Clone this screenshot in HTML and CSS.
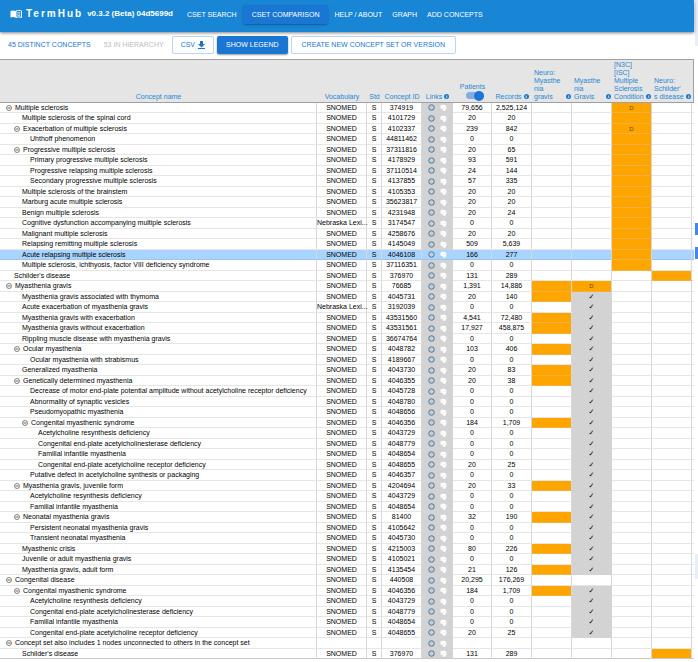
FILE: index.html
```html
<!DOCTYPE html>
<html lang="en">
<head>
<meta charset="utf-8">
<title>TermHub</title>
<link rel="stylesheet" href="styles.css">
</head>
<body>
<div class="page">
  <main class="app">
    <header class="topbar">
      <svg class="logo" viewBox="0 0 24 24" aria-hidden="true"><path fill="currentColor" d="M1 6c3-1.500 7-1.500 11 0v13c-4-1.500-8-1.500-11 0z"/><path fill="none" stroke="currentColor" stroke-width="2" d="M12 6c4-1.500 7-1.500 11 0v13c-4-1.500-7-1.500-11 0z"/><path fill="none" stroke="currentColor" stroke-width="1.500" d="M14.500 9.500q3-1 6 0M14.500 12.500q3-1 6 0M14.500 15.500q3-1 6 0"/></svg>
      <span class="brand">TermHub</span>
      <span class="version">v0.3.2 (Beta) 04d5699d</span>
      <nav class="nav">
        <a href="#">CSET SEARCH</a>
        <a href="#" class="active">CSET COMPARISON</a>
        <a href="#">HELP / ABOUT</a>
        <a href="#">GRAPH</a>
        <a href="#">ADD CONCEPTS</a>
      </nav>
    </header>
    <section class="toolbar">
      <button class="btn plain">45 DISTINCT CONCEPTS</button>
      <button class="btn plain" disabled>53 IN HIERARCHY</button>
      <button class="btn outlined csv">CSV <svg class="download" viewBox="0 0 14 16" aria-hidden="true"><path fill="currentColor" d="M4 0h6v6h4l-7 7-7-7h4zM0 14h14v2H0z"/></svg></button>
      <button class="btn filled">SHOW LEGEND</button>
      <button class="btn outlined wide">CREATE NEW CONCEPT SET OR VERSION</button>
    </section>
    <div class="tablewrap">
    <table class="grid">
      <colgroup>
        <col><col class="c-vocab"><col class="c-std"><col class="c-num"><col class="c-links"><col class="c-pat"><col class="c-num"><col class="c-num"><col class="c-num"><col class="c-num"><col class="c-num"><col class="c-edge">
      </colgroup>
      <thead>
        <tr>
          <th>Concept name</th>
          <th>Vocabulary</th>
          <th>Std</th>
          <th>Concept ID</th>
          <th><span class="head">Links <i class="info">i</i></span></th>
          <th><label class="patients">Patients<input type="checkbox" class="switch" checked></label></th>
          <th><span class="head">Records <i class="info">i</i></span></th>
          <th class="cset"><span class="head"><span>Neuro:<br>Myasthe<br>nia<br>gravis</span><i class="info">i</i></span></th>
          <th class="cset"><span class="head"><span>Myasthe<br>nia<br>Gravis</span><i class="info">i</i></span></th>
          <th class="cset"><span class="head"><span>[N3C]<br>[ISC]<br>Multiple<br>Sclerosis<br>Condition</span><i class="info">i</i></span></th>
          <th class="cset"><span class="head"><span>Neuro:<br>Schilder'<br>s disease</span><i class="info">i</i></span></th>
          <th></th>
        </tr>
      </thead>
      <tbody id="rows"></tbody>
    </table>
    </div>
  </main>
  <aside class="strip"><span class="pale top"></span><span class="mark first"></span><span class="mark"></span><span class="pale low"></span></aside>
</div>
<script src="rows.js"></script>
</body>
</html>
```
FILE: styles.css
```css
* { box-sizing: border-box; }
body { margin: 0; background: #fff; color: #000; font: 7px/8px "Liberation Sans", Arial, sans-serif; }
.page { display: flex; }
.app { flex: 1; min-width: 0; }
.strip { width: 4px; display: flex; flex-direction: column; padding-left: 1px; }
.pale { background: #e9eefa; }
.top { height: 46px; }
.low { height: 25px; margin-top: 295px; }
.mark { height: 12px; background: #4285f4; margin-top: 12px; }
.first { margin-top: 177px; }

.topbar { display: flex; align-items: center; height: 32px; padding: 0 0 4px 10px; background: #1886d4; color: #fff; box-shadow: 0 1px 3px rgba(0, 0, 0, .5); position: relative; }
.logo { width: 12px; height: 12px; margin-right: 4px; }
.brand { font-size: 10px; font-weight: 700; line-height: 12px; letter-spacing: 2px; }
.version { font-size: 8px; font-weight: 700; line-height: 12px; margin-left: 4px; }
.nav { display: flex; gap: 2px; margin-left: 10px; }
.nav a { color: #fff; text-decoration: none; line-height: 19px; padding: 0 4px; }
.nav a.active { padding: 0 9px; background: #1976d2; border-radius: 2px; box-shadow: 0 1px 2px rgba(0, 0, 0, .3); }

.toolbar { display: flex; align-items: center; gap: 3px; height: 27px; padding: 0 3px 1px; }
.btn { font: inherit; height: 18px; padding: 0 8px; border: 1px solid transparent; border-radius: 2px; background: none; color: #1976d2; white-space: nowrap; }
.btn.plain { padding: 0 4px; }
.btn:disabled { color: #bdbdbd; }
.btn.outlined { border-color: #bad5f1; }
.btn.filled { background: #1976d2; color: #fff; box-shadow: 0 1px 2px rgba(0, 0, 0, .4); }
.btn.wide { padding: 0 10px; }
.csv { display: flex; align-items: center; gap: 3px; }
.download { width: 7px; height: 8px; }

.grid { width: 100%; table-layout: fixed; border-collapse: separate; border-spacing: 0; }
.c-vocab { width: 50px; }
.c-std { width: 15px; }
.c-num { width: 40px; }
.c-links { width: 31px; }
.c-pat { width: 39px; }
.c-edge { width: 2px; }
th { height: 44px; padding: 0 0 1px; background: #e5e5e5; border: 0 solid #a0a0a0; border-width: 1px 0; color: #2588d2; font-weight: 400; vertical-align: bottom; white-space: nowrap; }
th:last-child { border-right-width: 1px; }
.cset { text-align: left; padding-left: 2px; }
.head { display: flex; align-items: flex-end; justify-content: center; gap: 2px; }
.cset .head { justify-content: space-between; gap: 0; padding-right: 1px; }
.info { flex: none; width: 5px; height: 5px; margin-bottom: 2px; border-radius: 50%; background: #1976d2; color: #fff; font: 700 4px/5px "Liberation Serif", serif; text-align: center; }
.patients { display: flex; flex-direction: column; align-items: center; }
.switch { appearance: none; display: flex; align-items: center; justify-content: flex-end; width: 18px; height: 7px; margin: 1px 0 2px 4px; border-radius: 4px; background: #84aee0; }
.switch::before { content: ""; width: 10px; height: 10px; border-radius: 50%; background: #1976d2; }

tbody tr { height: 10px; }
tbody tr:nth-child(even) { height: 11px; }
td { padding: 0; border: 0 solid #d8d8d8; border-right-width: 1px; border-bottom: 1px solid #e6e6e6; text-align: center; white-space: nowrap; }
td:last-child { border-right: 0; }
.name { text-align: left; }
.node { display: flex; align-items: center; height: 8px; padding-left: 6px; }
.level1 { padding-left: 14px; }
.level2 { padding-left: 22px; }
.level3 { padding-left: 30px; }
.leaf::before { content: ""; width: 8px; }
.toggle { display: flex; padding: 0; border: 0; background: none; color: #333; margin-right: 3px; }
.toggle svg { width: 6px; height: 6px; }
.links { background: #d3d3d3; border-color: #d3d3d3; }
.linkset { display: flex; justify-content: center; align-items: center; gap: 5px; height: 8px; }
.linkset a { display: flex; }
.linkset svg { width: 7px; height: 7px; }
.on { background: #ffa500; border-bottom-color: #f3b040; }
.def { color: #6b4700; font-size: 6px; }
.check { background: #d3d3d3; border-color: #d3d3d3; font-family: "DejaVu Sans", sans-serif; font-weight: 700; }
.selected td:not(.on) { background: #a8d4ff; border-bottom-color: #9cc5ec; }
.selected .links { border-right-color: #a8d4ff; }
tbody tr:last-child td { border-bottom-color: #c8c8c8; }
```
FILE: rows.js
```js
// level | + for an expandable node | name | vocabulary | concept id | patients | records | four concept-set cells
// cell codes: . empty, o included, D definition, v checked
const data = `
0|+|Multiple sclerosis|S|374919|79,656|2,525,124|..D.
1||Multiple sclerosis of the spinal cord|S|4101729|20|20|..o.
1|+|Exacerbation of multiple sclerosis|S|4102337|239|842|..D.
2||Uhthoff phenomenon|S|44811462|0|0|..o.
1|+|Progressive multiple sclerosis|S|37311816|20|65|..o.
2||Primary progressive multiple sclerosis|S|4178929|93|591|..o.
2||Progressive relapsing multiple sclerosis|S|37110514|24|144|..o.
2||Secondary progressive multiple sclerosis|S|4137855|57|335|..o.
1||Multiple sclerosis of the brainstem|S|4105353|20|20|..o.
1||Marburg acute multiple sclerosis|S|35623817|20|20|..o.
1||Benign multiple sclerosis|S|4231948|20|24|..o.
1||Cognitive dysfunction accompanying multiple sclerosis|N|3174547|0|0|..o.
1||Malignant multiple sclerosis|S|4258676|20|20|..o.
1||Relapsing remitting multiple sclerosis|S|4145049|509|5,639|..o.
1||Acute relapsing multiple sclerosis|S|4046108|166|277|..o.
1||Multiple sclerosis, ichthyosis, factor VIII deficiency syndrome|S|37116351|0|0|..o.
0||Schilder's disease|S|376970|131|289|...o
0|+|Myasthenia gravis|S|76685|1,391|14,886|oD..
1||Myasthenia gravis associated with thymoma|S|4045731|20|140|ov..
1||Acute exacerbation of myasthenia gravis|N|3192039|0|0|.v..
1||Myasthenia gravis with exacerbation|S|43531560|4,541|72,480|ov..
1||Myasthenia gravis without exacerbation|S|43531561|17,927|458,875|ov..
1||Rippling muscle disease with myasthenia gravis|S|36674764|0|0|.v..
1|+|Ocular myasthenia|S|4048782|103|406|ov..
2||Ocular myasthenia with strabismus|S|4189667|0|0|.v..
1||Generalized myasthenia|S|4043730|20|83|ov..
1|+|Genetically determined myasthenia|S|4046355|20|38|ov..
2||Decrease of motor end-plate potential amplitude without acetylcholine receptor deficiency|S|4045728|0|0|.v..
2||Abnormality of synaptic vesicles|S|4048780|0|0|.v..
2||Pseudomyopathic myasthenia|S|4048656|0|0|.v..
2|+|Congenital myasthenic syndrome|S|4046356|184|1,709|ov..
3||Acetylcholine resynthesis deficiency|S|4043729|0|0|.v..
3||Congenital end-plate acetylcholinesterase deficiency|S|4048779|0|0|.v..
3||Familial infantile myasthenia|S|4048654|0|0|.v..
3||Congenital end-plate acetylcholine receptor deficiency|S|4048655|20|25|.v..
2||Putative defect in acetylcholine synthesis or packaging|S|4046357|0|0|.v..
1|+|Myasthenia gravis, juvenile form|S|4204694|20|33|ov..
2||Acetylcholine resynthesis deficiency|S|4043729|0|0|.v..
2||Familial infantile myasthenia|S|4048654|0|0|.v..
1|+|Neonatal myasthenia gravis|S|81400|32|190|ov..
2||Persistent neonatal myasthenia gravis|S|4105642|0|0|.v..
2||Transient neonatal myasthenia|S|4045730|0|0|.v..
1||Myasthenic crisis|S|4215003|80|226|ov..
1||Juvenile or adult myasthenia gravis|S|4105021|0|0|.v..
1||Myasthenia gravis, adult form|S|4135454|21|126|ov..
0|+|Congenital disease|S|440508|20,295|176,269|....
1|+|Congenital myasthenic syndrome|S|4046356|184|1,709|ov..
2||Acetylcholine resynthesis deficiency|S|4043729|0|0|.v..
2||Congenital end-plate acetylcholinesterase deficiency|S|4048779|0|0|.v..
2||Familial infantile myasthenia|S|4048654|0|0|.v..
2||Congenital end-plate acetylcholine receptor deficiency|S|4048655|20|25|.v..
0|+|Concept set also includes 1 nodes unconnected to others in the concept set||||||....
1||Schilder's disease|S|376970|131|289|...o`.trim().split("\n");

const vocab = { S: "SNOMED", N: "Nebraska Lexi..." };
const cells = {
  ".": "<td></td>",
  o: '<td class="on"></td>',
  D: '<td class="on def">D</td>',
  v: '<td class="check">✓</td>'
};
const toggle = '<button class="toggle" aria-label="Collapse"><svg viewBox="0 0 12 12"><circle cx="6" cy="6" r="5" fill="none" stroke="currentColor" stroke-width="1.2"/><path d="M3 6h6" stroke="currentColor" stroke-width="1.5"/></svg></button>';
const links = '<div class="linkset"><a href="#" aria-label="Athena"><svg viewBox="0 0 14 14"><circle cx="7" cy="7" r="5.500" fill="#c3d0da" stroke="#4c7796" stroke-width="2"/></svg></a><a href="#" aria-label="Atlas"><svg viewBox="0 0 14 14"><path fill="#fff" d="M1 3l5-2 6 2 1 5-2 5-4 1-2-4-4-1z"/><path d="M5 5l2 2 4 1" fill="none" stroke="#ddd"/></svg></a></div>';

document.getElementById("rows").innerHTML = data.map(line => {
  const f = line.split("|");
  const [level, open, name, voc, id, patients, records] = f;
  const codes = f[f.length - 1];
  return `<tr class="${id === "4046108" ? "selected" : ""}">
    <td class="name"><div class="node level${level} ${open ? "" : "leaf"}">${open ? toggle : ""}<span>${name}</span></div></td>
    <td>${vocab[voc] || ""}</td><td>${voc ? "S" : ""}</td><td>${id}</td>
    <td class="links">${links}</td><td>${patients}</td><td>${records}</td>
    ${[...codes].map(c => cells[c]).join("")}<td></td></tr>`;
}).join("");
```
